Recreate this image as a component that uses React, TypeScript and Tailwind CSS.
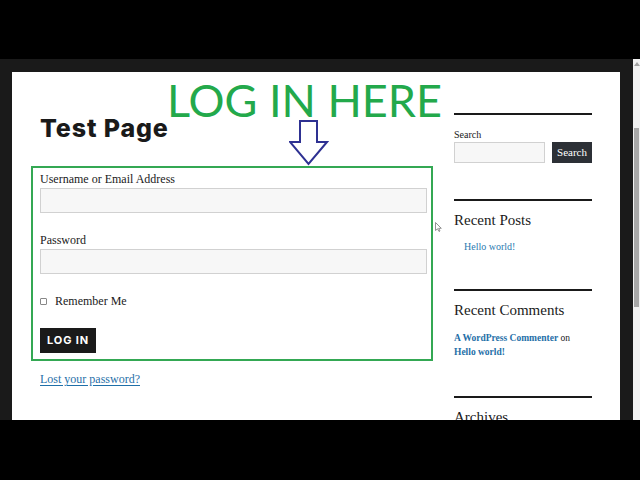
const serif = { fontFamily: '"Liberation Serif", "Times New Roman", serif' };

function Rule() {
  return <div className="h-[2px] bg-[#1a1a1a]" />;
}

function DownArrow() {
  return (
    <svg width="40" height="46" viewBox="0 0 40 46" className="block">
      <path
        d="M11 1 H28 V22 H38 L19.5 44 L1 22 H11 Z"
        fill="#ffffff"
        stroke="#2e3192"
        strokeWidth="2"
        strokeLinejoin="miter"
      />
    </svg>
  );
}

function Cursor() {
  return (
    <svg width="7" height="10" viewBox="0 0 7 10" className="block">
      <path d="M0.5 0.5 V8.5 L2.5 6.8 L4 9.5 L5 9 L3.7 6.3 L6.3 6.3 Z" fill="#fff" stroke="#777" strokeWidth="0.8" />
    </svg>
  );
}

function LoginForm() {
  return (
    <div className="border-2 border-[#34a853] pl-[7px] pr-[4px] pt-[3px] pb-[6px]" style={serif}>
      <label className="block text-[12px] leading-[16px] text-[#1a1a1a]">Username or Email Address</label>
      <div className="mt-[1px] h-[25px] border border-[#d1d1d1] bg-[#f7f7f7]" />
      <label className="mt-[19px] block text-[12px] leading-[16px] text-[#1a1a1a]">Password</label>
      <div className="mt-[1px] h-[25px] border border-[#d1d1d1] bg-[#f7f7f7]" />
      <div className="mt-[19px] flex h-[16px] items-center gap-[8px] text-[12px] leading-[16px] text-[#1a1a1a]">
        <span className="h-[7px] w-[7px] rounded-[1px] border border-[#888] bg-white" />
        <span>Remember Me</span>
      </div>
      <button
        className="mt-[19px] flex h-[25px] w-[56px] items-center justify-center bg-[#1a1a1a] text-[11px] font-bold tracking-[0.08em] text-white"
        style={{ fontFamily: 'Inter, "Open Sans", sans-serif' }}
      >
        LOG IN
      </button>
    </div>
  );
}

function Sidebar() {
  return (
    <aside className="flex w-[138px] shrink-0 flex-col text-[#1a1a1a]" style={serif}>
      <div className="mt-[41px]">
        <Rule />
      </div>
      <div className="mt-[13px] text-[10px] leading-[13px]">Search</div>
      <div className="mt-[1px] flex gap-[7px]">
        <div className="h-[21px] w-[91px] border border-[#d1d1d1] bg-[#f7f7f7]" />
        <button className="flex h-[21px] flex-1 items-center justify-center bg-[#2c3036] text-[11px] text-white" style={serif}>
          Search
        </button>
      </div>
      <div className="mt-[36px]">
        <Rule />
      </div>
      <h2 className="mt-[9px] text-[15px] leading-[20px]">Recent Posts</h2>
      <a className="mt-[10px] pl-[10px] text-[10px] leading-[13px] text-[#2a7ab0]">Hello world!</a>
      <div className="mt-[36px]">
        <Rule />
      </div>
      <h2 className="mt-[9px] text-[15px] leading-[20px]">Recent Comments</h2>
      <p className="mt-[11px] text-[9.5px] leading-[14px]">
        <a className="font-bold text-[#1f6fa8]">A WordPress Commenter</a> on
        <br />
        <a className="font-bold text-[#1f6fa8]">Hello world!</a>
      </p>
      <div className="mt-[37px]">
        <Rule />
      </div>
      <h2 className="mt-[9px] text-[15px] leading-[20px]">Archives</h2>
    </aside>
  );
}

export default function App() {
  return (
    <div className="flex h-[480px] w-[640px] flex-col overflow-hidden bg-black">
      <div className="h-[59px] shrink-0" />
      <div className="flex h-[361px] shrink-0 overflow-hidden bg-[#1a1a1a]">
        <div className="w-[12px] shrink-0" />
        <div className="mt-[13px] flex w-[608px] shrink-0 gap-[21px] bg-white pl-[19px] pr-[28px]">
          <main className="relative flex w-[402px] shrink-0 flex-col">
            <h1
              className="mt-[44px] pl-[9px] text-[25px] font-extrabold leading-[25px] tracking-[0.035em] text-[#1a1a1a]"
              style={{ fontFamily: 'Inter, "Open Sans", sans-serif' }}
            >
              Test Page
            </h1>
            <div className="mt-[25px]">
              <LoginForm />
            </div>
            <a
              className="mt-[10px] self-start pl-[9px] text-[12px] leading-[16px] text-[#1f6fa8] underline underline-offset-2"
              style={serif}
            >
              Lost your password?
            </a>

            {/* annotation overlay */}
            <div
              className="absolute left-[136px] top-[1px] whitespace-nowrap text-[45px] leading-[54px] text-[#23a94b]"
              style={{ fontFamily: 'Lato, "Open Sans", sans-serif' }}
            >
              LOG IN HERE
            </div>
            <div className="absolute left-[258px] top-[48px]">
              <DownArrow />
            </div>
            <div className="absolute left-[404px] top-[150px]">
              <Cursor />
            </div>
          </main>
          <Sidebar />
        </div>
        <div className="w-[13px] shrink-0" />
        <div className="flex w-[7px] shrink-0 flex-col items-center bg-[#f1f1f1]">
          <div className="mt-[3px] h-0 w-0 border-x-[3px] border-b-[4px] border-x-transparent border-b-[#a3a3a3]" />
          <div className="mt-[62px] h-[179px] w-[5px] bg-[#a8a8a8]" />
        </div>
      </div>
      <div className="flex-1" />
    </div>
  );
}
